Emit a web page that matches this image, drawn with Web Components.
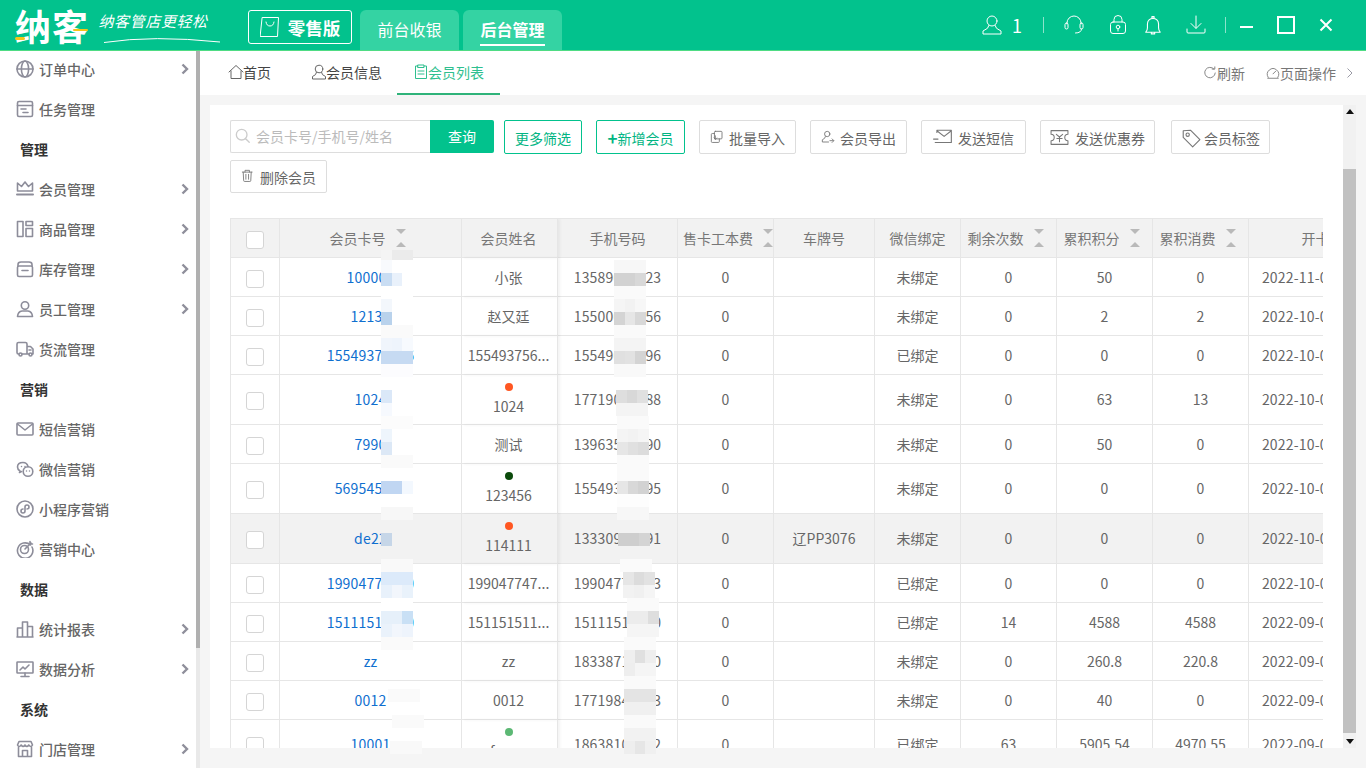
<!DOCTYPE html>
<html lang="zh-CN">
<head>
<meta charset="utf-8">
<title>纳客 - 会员列表</title>
<style>
  html, body { margin: 0; height: 100%; overflow: hidden; }
  body { font-family: "Noto Sans CJK SC", "Liberation Sans", sans-serif; }
</style>
</head>
<body>
<nk-app>
  <nk-header slot="header"></nk-header>
  <nk-sidenav slot="side">
    <nav-item icon="globe" arrow>订单中心</nav-item>
    <nav-item icon="task">任务管理</nav-item>
    <nav-title>管理</nav-title>
    <nav-item icon="crown" arrow>会员管理</nav-item>
    <nav-item icon="goods" arrow>商品管理</nav-item>
    <nav-item icon="box" arrow>库存管理</nav-item>
    <nav-item icon="staff" arrow>员工管理</nav-item>
    <nav-item icon="truck">货流管理</nav-item>
    <nav-title>营销</nav-title>
    <nav-item icon="mail">短信营销</nav-item>
    <nav-item icon="wechat">微信营销</nav-item>
    <nav-item icon="mini">小程序营销</nav-item>
    <nav-item icon="target">营销中心</nav-item>
    <nav-title>数据</nav-title>
    <nav-item icon="bars" arrow>统计报表</nav-item>
    <nav-item icon="screen" arrow>数据分析</nav-item>
    <nav-title>系统</nav-title>
    <nav-item icon="store" arrow>门店管理</nav-item>
  </nk-sidenav>
  <nk-tabs slot="tabs"></nk-tabs>
  <nk-card slot="content">
    <member-toolbar slot="toolbar"></member-toolbar>
    <member-table slot="table"></member-table>
  </nk-card>
  <page-scrollbar slot="scroll"></page-scrollbar>
  <mosaic-layer slot="over"></mosaic-layer>
</nk-app>

<script>
const ICONS = {
  globe: '<circle cx="9" cy="9" r="8"/><ellipse cx="9" cy="9" rx="3.6" ry="8"/><path d="M1 9h16"/>',
  task: '<rect x="1.5" y="1.5" width="15" height="15" rx="1.5"/><path d="M1.5 5.5h15M5 9h5M7 12.5h5"/>',
  crown: '<path d="M1.5 11V3l4 3.5L9 2l3.5 4.5 4-3.5v8z"/><path d="M1 14.5h16" stroke-width="2"/>',
  goods: '<rect x="1.5" y="1.5" width="5.5" height="15"/><rect x="10" y="1.5" width="6.5" height="4"/><rect x="10" y="8.5" width="6.5" height="8"/>',
  box: '<path d="M2 6V4.500Q2 2 5 2h8q3 0 3 2.500V6"/><rect x="1.500" y="6" width="15" height="10.500" rx="1.500"/><path d="M6 10.500h6"/>',
  staff: '<circle cx="9" cy="5.500" r="3.700"/><path d="M1.500 16.500Q2 11.500 6 11h6q4 .5 4.500 5.500z"/>',
  truck: '<path d="M11 14H6M2.500 14Q1 14 1 12.500V4q0-1.500 1.500-1.500h7Q11 2.500 11 4v10h2M11 6.500h3.500L17 9v5h-1"/><circle cx="4.500" cy="14.500" r="1.500"/><circle cx="14.500" cy="14.500" r="1.500"/><path d="M13 10h2"/>',
  mail: '<rect x="1" y="3" width="16" height="12" rx="1"/><path d="M1.500 4L9 10l7.500-6"/>',
  wechat: '<path d="M12 6.500Q11 2.500 7 2.500 1.500 2.500 1.500 7q0 2.500 2.500 4l-.5 1.500 2-1"/><circle cx="12" cy="11.500" r="4.800"/><path d="M5.500 6.500h.01M9 6.500h.01M10.500 11h.01M13.500 11h.01" stroke-width="1.500"/>',
  mini: '<circle cx="9" cy="9" r="8"/><path d="M9 7v4a2 2 0 1 1-2-2M9 11V7a2 2 0 1 1 2 2"/>',
  target: '<path d="M14.500 5A7.700 7.700 0 1 0 16 7"/><circle cx="8.500" cy="9.500" r="4"/><path d="M9 9l6-6M14 1.500v2.500h2.500"/>',
  bars: '<path d="M1.500 17V8h5v9M6.500 17V2h5v15M11.500 17V6.500h5V17M1 17h16"/>',
  screen: '<rect x="1" y="2" width="16" height="11" rx=".5"/><path d="M9 13v3M5 16.500h8M4 10l3-3 2 2 4-4"/>',
  store: '<path d="M2.500 7.500V16.500h13V7.500M1.500 5L3 1.500h12L16.500 5q-1.500 3-3.700 0-1.900 3-3.800 0-1.900 3-3.800 0Q3 8 1.500 5zM6.500 16.500v-6h5v6"/>',

  home: '<path d="M1 8l7-6.500L15 8M3 7v7.500h10V7"/>',
  user: '<circle cx="8" cy="5" r="3.800"/><path d="M5.500 8.500Q5.500 11 1.500 12.500V15h13v-2.500q-4-1.500-4-4"/>',
  clip: '<path d="M5 2H2.500v12.500h11V2H11"/><rect x="5" y="1" width="6" height="2.500"/><path d="M5 7h6M5 10h6"/>',
  refresh: '<path d="M12.500 3.500A6 6 0 1 0 14 8M10.500 3.500h3V1"/>',
  gauge: '<path d="M2.500 13A6.500 6.500 0 1 1 13.500 13M8 9l3-3M2 14h12"/>',

  search: '<circle cx="7.500" cy="7.500" r="6"/><path d="M12 12l4 4"/>',
  batch: '<rect x="5" y="1.500" width="8.500" height="8.500" rx="1"/><path d="M5 4H2.500A1 1 0 0 0 1.500 5v8a1 1 0 0 0 1 1h7a1 1 0 0 0 1-1v-3M6 6.500v4M4.500 9L6 10.500 7.500 9"/>',
  export: '<circle cx="7" cy="4.500" r="3"/><path d="M5 7.500Q5 9.500 1.500 11v2.500h7M10 12h4M12.500 10l2 2-2 2"/>',
  sms: '<path d="M3.500 4V2h13v11h-13M3.500 2.500l6.500 5 6.500-5M.5 10h4M2 13h3"/>',
  coupon: '<path d="M1 2.500h16v3.500a3 3 0 0 0 0 6v3.500H1V12a3 3 0 0 0 0-6zM6 6l3 2.500L12 6M9 8.500V13M6.500 10h5"/>',
  tag: '<path d="M2 2.500L8.500 2 17 10.500 10.500 17 2 8.500z"/><circle cx="6" cy="6" r="1.500"/>',
  trash: '<path d="M1.500 3.500h11M4.500 3.500V1.500h5v2M2.500 3.500l.5 9.500q0 1 1 1h6q1 0 1-1l.5-9.500M5.500 6v5.500M8.500 6v5.500"/>',
  bag: '<path d="M2.500.5h16l-1 19H.5zM6 5q.5 4 4 4t4-4"/>',
  headset: '<path d="M3 9V8a7 7 0 0 1 14 0v1"/><rect x="1" y="8" width="3" height="6" rx="1.500"/><rect x="16" y="8" width="3" height="6" rx="1.500"/><path d="M17.500 14q0 4-6 4"/>',
  lock: '<path d="M5 7V4.500a4 4 0 0 1 8 0V7"/><rect x="1.500" y="7" width="15" height="11.500" rx="2.500"/><circle cx="9" cy="12" r="1.800"/><path d="M9 14v2"/>',
  bell: '<path d="M8 2.500V1.500h2v1M2.500 15.500q1.500-1.500 1.500-4V8a5 5 0 0 1 10 0v3.500q0 2.500 1.500 4zM7.500 15.500v1.500h3v-1.500"/>',
  down: '<path d="M10 1v12M5 8.500l5 5 5-5M1 14v3q0 1 1 1h16q1 0 1-1v-3"/>',
  account: '<circle cx="10" cy="6" r="5"/><path d="M7 10.500Q7 13.500 1 16v3h18v-3q-6-2.500-6-5.500"/>'
};

function svg(name, w, h, vb) {
  return `<svg width="${w}" height="${h}" viewBox="0 0 ${vb}" fill="none" stroke="currentColor" stroke-linecap="round" stroke-linejoin="round">${ICONS[name]}</svg>`;
}

class NkApp extends HTMLElement {
  constructor() {
    super();
    this.attachShadow({ mode: "open" });
  }
  connectedCallback() {
    this.shadowRoot.innerHTML = `
      <style>
        :host { display: flex; flex-direction: column; width: 1366px; height: 768px; overflow: hidden; background: #f5f5f5; }
        .body { flex: 1; display: flex; min-height: 0; }
        .main { flex: 1; display: flex; flex-direction: column; min-width: 0; }
        .pane { flex: 1; display: flex; min-height: 0; padding: 10px 10px 20px 10px; }
      </style>
      <slot name="header"></slot>
      <div class="body">
        <slot name="side"></slot>
        <div class="main">
          <slot name="tabs"></slot>
          <div class="pane">
            <slot name="content"></slot>
            <slot name="scroll"></slot>
          </div>
        </div>
      </div>
      <slot name="over"></slot>
    `;
  }
}

class NkHeader extends HTMLElement {
  constructor() {
    super();
    this.attachShadow({ mode: "open" });
  }
  connectedCallback() {
    this.shadowRoot.innerHTML = `
      <style>
        :host { display: flex; align-items: stretch; height: 51px; box-sizing: border-box; background: #02c28d; border-bottom: 1px solid #4fdc84; color: #fff; flex: none; }
        .logo { position: relative; margin-left: 15px; width: 75px; font-size: 36px; font-weight: 700; line-height: 50px; letter-spacing: 1px; white-space: nowrap; }
        .logo i { position: absolute; background: #f5c518; border-radius: 2px; }
        .slogan { width: 148px; margin-left: 10px; position: relative; }
        .slogan span { display: block; font-size: 15px; line-height: 20px; margin-top: 11px; letter-spacing: .6px; transform: skewX(-14deg); white-space: nowrap; }
        .slogan svg { position: absolute; left: 3px; top: 36px; }
        .edition { display: flex; align-items: center; justify-content: center; gap: 9px; width: 104px; height: 34px; box-sizing: border-box; margin: 10px 8px 0 0; border: 1px solid #fff; border-radius: 3px; font-size: 17.500px; font-weight: 700; }
        .tab { width: 99px; height: 40px; margin: 10px 4px 0 0; background: #34d3a3; border-radius: 6px 6px 0 0; font-size: 16px; display: flex; justify-content: center; }
        .tab span { line-height: 38px; height: 34px; }
        .tab.on span { font-weight: 700; border-bottom: 2px solid #fff; }
        .right { margin-left: auto; display: flex; align-items: center; padding-right: 20px; height: 50px; }
        .num { font-size: 18px; margin-left: 10px; width: 10px; text-align: center; }
        .sep { width: 1px; height: 16px; background: rgba(255,255,255,.55); }
        .ic { display: flex; justify-content: center; }
        .win { width: 40px; display: flex; justify-content: center; align-items: center; }
        .min { width: 13px; height: 2px; background: #fff; }
        .max { width: 14px; height: 14px; border: 2px solid #fff; }
      </style>
      <div class="logo">纳客<i style="left:0;top:37px;width:10px;height:3px"></i><i style="left:58px;top:29px;width:15px;height:2px"></i></div>
      <div class="slogan"><span>纳客管店更轻松</span>
        <svg width="118" height="8" viewBox="0 0 118 8" fill="none" stroke="#fff"><path d="M1 6.500Q50 -1 117 6" stroke-width="1"/></svg>
      </div>
      <div class="edition">${svg("bag", 19, 20, "19 20")}<span>零售版</span></div>
      <div class="tab"><span>前台收银</span></div>
      <div class="tab on"><span>后台管理</span></div>
      <div class="right">
        ${svg("account", 20, 20, "20 20")}
        <span class="num">1</span>
        <span class="sep" style="margin:0 19px 0 21px"></span>
        <span class="ic" style="margin-right:24px">${svg("headset", 22, 20, "20 20")}</span>
        <span class="ic" style="margin-right:15px">${svg("lock", 18, 20, "18 20")}</span>
        <span class="ic" style="margin-right:22px">${svg("bell", 22, 20, "18 18")}</span>
        <span class="ic" style="margin-right:19px">${svg("down", 20, 20, "20 20")}</span>
        <span class="sep"></span>
        <span class="win"><i class="min" style="margin-top:4px"></i></span>
        <span class="win"><i class="max"></i></span>
        <span class="win"><svg width="14" height="14" viewBox="0 0 14 14" stroke="#fff" stroke-width="2"><path d="M1.500 1.500l11 11M12.500 1.500l-11 11"/></svg></span>
      </div>
    `;
  }
}

class NkSidenav extends HTMLElement {
  constructor() {
    super();
    this.attachShadow({ mode: "open" });
  }
  connectedCallback() {
    this.shadowRoot.innerHTML = `
      <style>
        :host { display: flex; width: 200px; flex: none; height: 717px; overflow: hidden; background: #fff; }
        .list { width: 196px; height: 760px; margin-top: -2px; }
        .bar { width: 4px; height: 717px; background: #e9e9e9; }
        .bar i { display: block; height: 597px; background: #b0b0b0; }
      </style>
      <div class="list"><slot></slot></div>
      <div class="bar"><i></i></div>
    `;
  }
}

class NavItem extends HTMLElement {
  constructor() {
    super();
    this.attachShadow({ mode: "open" });
  }
  connectedCallback() {
    const arrow = this.hasAttribute("arrow");
    this.shadowRoot.innerHTML = `
      <style>
        :host { display: flex; align-items: center; height: 40px; padding-left: 16px; color: #666; font-size: 14px; font-weight: 500; }
        svg.i { color: #8d8d9a; margin-right: 5px; flex: none; stroke-width: 1.600; }
        .lab { flex: 1; line-height: 20px; }
        svg.a { margin-right: 7px; }
      </style>
      ${svg(this.getAttribute("icon"), 18, 18, "18 18").replace("<svg", '<svg class="i"')}
      <span class="lab"><slot></slot></span>
      ${arrow ? '<svg class="a" width="8" height="12" viewBox="0 0 8 12" fill="none" stroke="#8f8f9b" stroke-width="2.400"><path d="M1.500 1.500L6 6l-4.500 4.500"/></svg>' : ""}
    `;
  }
}

class NavTitle extends HTMLElement {
  constructor() {
    super();
    this.attachShadow({ mode: "open" });
  }
  connectedCallback() {
    this.shadowRoot.innerHTML = `
      <style>
        :host { display: block; height: 40px; line-height: 40px; padding-left: 20px; color: #333; font-size: 14px; font-weight: 700; }
      </style>
      <slot></slot>
    `;
  }
}

class NkTabs extends HTMLElement {
  constructor() {
    super();
    this.attachShadow({ mode: "open" });
  }
  connectedCallback() {
    this.shadowRoot.innerHTML = `
      <style>
        :host { display: flex; align-items: stretch; height: 44px; padding-left: 12px; background: #fff; font-size: 14px; color: #444; flex: none; }
        .t { display: flex; align-items: center; padding: 0 16px; height: 42px; }
        .t svg { margin-right: -1px; color: #666; stroke-width: 1; }
        .on { color: #2fbf8f; border-bottom: 2px solid #2fb37a; }
        .on svg { color: #2fbf8f; }
        .tools { margin-left: auto; display: flex; align-items: center; height: 44px; color: #777; padding-right: 12px; }
        .tools svg { color: #777; stroke-width: 1; }
      </style>
      <div class="t" style="margin-right:8px">${svg("home", 16, 16, "16 16")}<span>首页</span></div>
      <div class="t" style="margin-right:-1px">${svg("user", 16, 16, "16 16")}<span>会员信息</span></div>
      <div class="t on">${svg("clip", 16, 16, "16 16")}<span>会员列表</span></div>
      <div class="tools">
        ${svg("refresh", 14, 14, "16 16")}<span style="margin-right:21px">刷新</span>
        ${svg("gauge", 14, 14, "16 16")}<span>页面操作</span>
        <svg style="margin-left:10px" width="8" height="12" viewBox="0 0 8 12" fill="none" stroke="#9a9aa5" stroke-width="2.400"><path d="M1.500 1.500L6 6l-4.500 4.500"/></svg>
      </div>
    `;
  }
}

class NkCard extends HTMLElement {
  constructor() {
    super();
    this.attachShadow({ mode: "open" });
  }
  connectedCallback() {
    this.shadowRoot.innerHTML = `
      <style>
        :host { display: block; flex: 1; min-width: 0; background: #fff; padding: 15px 20px 0 20px; overflow: hidden; }
      </style>
      <slot name="toolbar"></slot>
      <slot name="table"></slot>
    `;
  }
}

class ToolButton extends HTMLElement {
  constructor() {
    super();
    this.attachShadow({ mode: "open" });
  }
  connectedCallback() {
    const icon = this.getAttribute("icon");
    const size = this.getAttribute("size") || 16;
    this.shadowRoot.innerHTML = `
      <style>
        :host { display: inline-flex; align-items: center; justify-content: center; gap: 3px; height: 34px; padding-top: 1px; box-sizing: border-box; border: 1px solid #ddd; border-radius: 2px; color: #666; font-size: 14px; background: #fff; }
        :host([primary]) { border-color: #02c28d; color: #02b583; gap: 0; }
        svg { color: #777; stroke-width: 1; flex: none; }
      </style>
      ${icon ? svg(icon, size, size, "18 18") : ""}
      <slot></slot>
    `;
    this.style.width = this.getAttribute("w") + "px";
  }
}

class MemberToolbar extends HTMLElement {
  constructor() {
    super();
    this.attachShadow({ mode: "open" });
  }
  connectedCallback() {
    this.shadowRoot.innerHTML = `
      <style>
        :host { display: flex; flex-wrap: wrap; gap: 6px 14px; font-size: 14px; }
        .search { display: flex; height: 33px; margin-right: -4px; }
        .inp { width: 200px; box-sizing: border-box; border: 1px solid #ddd; border-right: 0; border-radius: 2px 0 0 2px; display: flex; align-items: center; gap: 5px; padding: 0 0 2px 4px; color: #bbb; }
        .inp svg { color: #ccc; stroke-width: 1.500; }
        .go { width: 64px; background: #02c28d; color: #fff; border-radius: 0 2px 2px 0; display: flex; align-items: center; justify-content: center; padding-bottom: 2px; box-sizing: border-box; }
        .plus { font-weight: 700; font-size: 17px; line-height: 16px; }
      </style>
      <div class="search">
        <div class="inp">${svg("search", 16, 16, "18 18")}<span>会员卡号/手机号/姓名</span></div>
        <div class="go">查询</div>
      </div>
      <tool-button w="78" primary>更多筛选</tool-button>
      <tool-button w="89" primary><span class="plus">+</span>新增会员</tool-button>
      <tool-button w="97" icon="batch">批量导入</tool-button>
      <tool-button w="97" icon="export">会员导出</tool-button>
      <tool-button w="105" icon="sms" size="20" style="gap:5px">发送短信</tool-button>
      <tool-button w="115" icon="coupon" size="19" style="gap:6px">发送优惠券</tool-button>
      <tool-button w="99" icon="tag" size="20" style="margin-left:2px">会员标签</tool-button>
      <tool-button w="97" icon="trash" style="height:33px">删除会员</tool-button>
    `;
  }
}

// 会员数据，隐藏的号码用 0 占位
const MEMBERS = [
  ["100001", "小张", "", "13589000023", "", "未绑定", "0", "50", "0", "2022-11-01 10:00:00"],
  ["12134", "赵又廷", "", "15500000056", "", "未绑定", "0", "2", "2", "2022-10-01 10:00:00"],
  ["15549375696", "155493756...", "", "15549000096", "", "已绑定", "0", "0", "0", "2022-10-01 10:00:00"],
  ["1024", "1024", "#ff5722", "17719000088", "", "未绑定", "0", "63", "13", "2022-10-01 10:00:00"],
  ["7990", "测试", "", "13963500090", "", "未绑定", "0", "50", "0", "2022-10-01 10:00:00"],
  ["569545000", "123456", "#0b4a0b", "15549300095", "", "未绑定", "0", "0", "0", "2022-10-01 10:00:00"],
  ["de22", "114111", "#ff5722", "13330900091", "辽PP3076", "未绑定", "0", "0", "0", "2022-10-01 10:00:00"],
  ["19904770000", "199047747...", "", "19904770003", "", "已绑定", "0", "0", "0", "2022-10-01 10:00:00"],
  ["15111515000", "151151511...", "", "15111515000", "", "已绑定", "14", "4588", "4588", "2022-09-01 10:00:00"],
  ["zz", "zz", "", "18338710000", "", "未绑定", "0", "260.8", "220.8", "2022-09-01 10:00:00"],
  ["0012", "0012", "", "17719840003", "", "未绑定", "0", "40", "0", "2022-09-01 10:00:00"],
  ["10001", "fanan", "#5cb874", "18638100002", "", "已绑定", "63", "5905.54", "4970.55", "2022-09-01 10:00:00"]
];

class MemberTable extends HTMLElement {
  constructor() {
    super();
    this.attachShadow({ mode: "open" });
  }
  sortHead(text, start) {
    return `<div class="sh${start ? " st" : ""}"><span>${text}</span><i class="ar"><b class="d"></b><b class="u"></b></i></div>`;
  }
  connectedCallback() {
    const rows = MEMBERS.map((m, i) => `
      <tr class="${m[2] ? "tall" : ""}${i === 6 ? " hov" : ""}">
        <td><i class="cb"></i></td>
        <td><a>${m[0]}</a></td>
        <td class="nm">${m[2] ? `<i class="dot" style="background:${m[2]}"></i>` : ""}<div>${m[1]}</div></td>
        <td class="num">${m[3]}</td>
        <td>0</td>
        <td>${m[4]}</td>
        <td>${m[5]}</td>
        <td>${m[6]}</td>
        <td>${m[7]}</td>
        <td>${m[8]}</td>
        <td class="num date">${m[9]}</td>
      </tr>`).join("");
    this.shadowRoot.innerHTML = `
      <style>
        :host { display: block; margin-top: 25px; width: 1093px; box-sizing: border-box; overflow: hidden; border-left: 1px solid #e6e6e6; border-top: 1px solid #e6e6e6; font-size: 14px; color: #666; }
        table { border-collapse: separate; border-spacing: 0; table-layout: fixed; width: 1180px; }
        th, td { box-sizing: border-box; height: 39px; padding: 0; border-right: 1px solid #e6e6e6; border-bottom: 1px solid #e6e6e6; text-align: center; white-space: nowrap; overflow: hidden; line-height: 20px; }
        th { background: #f2f2f2; font-weight: 400; font-size: 14px; color: #777; }
        tr.tall td { height: 50px; padding-bottom: 1px; }
        tr.hov td { background: #f2f2f2; }
        td:nth-child(3), th:nth-child(3) { box-shadow: 2px 0 3px rgba(0,0,0,.05); position: relative; padding-right: 2px; }
        a { color: #0f6fcf; letter-spacing: .2px; }
        .num { letter-spacing: .2px; }
        .date { padding-right: 2px; }
        .cb { display: inline-block; width: 18px; height: 18px; box-sizing: border-box; border: 1px solid #d5d5d5; border-radius: 3px; background: #fff; vertical-align: middle; }
        .dot { display: block; width: 8px; height: 8px; border-radius: 50%; margin: 0 auto 5px; }
        .sh { display: flex; justify-content: center; align-items: center; gap: 10px; padding-right: 6px; }
        .sh.st { justify-content: flex-start; padding: 0 0 0 5px; white-space: nowrap; }
        .ar { display: flex; flex-direction: column; gap: 8px; flex: none; width: 10px; }
        .ar b { width: 0; height: 0; border-left: 5px solid transparent; border-right: 5px solid transparent; }
        .d { border-top: 5px solid #b9b9b9; }
        .u { border-bottom: 5px solid #b9b9b9; }
      </style>
      <table>
        <colgroup>
          <col style="width:49px"><col style="width:182px"><col style="width:96px"><col style="width:120px"><col style="width:96px"><col style="width:101px"><col style="width:86px"><col style="width:96px"><col style="width:96px"><col style="width:96px"><col style="width:162px">
        </colgroup>
        <thead>
          <tr>
            <th><i class="cb"></i></th>
            <th>${this.sortHead("会员卡号")}</th>
            <th>会员姓名</th>
            <th>手机号码</th>
            <th>${this.sortHead("售卡工本费", true)}</th>
            <th>车牌号</th>
            <th>微信绑定</th>
            <th>${this.sortHead("剩余次数")}</th>
            <th>${this.sortHead("累积积分")}</th>
            <th>${this.sortHead("累积消费")}</th>
            <th>开卡时间</th>
          </tr>
        </thead>
        <tbody>${rows}</tbody>
      </table>
    `;
  }
}

class PageScrollbar extends HTMLElement {
  constructor() {
    super();
    this.attachShadow({ mode: "open" });
  }
  connectedCallback() {
    this.shadowRoot.innerHTML = `
      <style>
        :host { display: flex; flex-direction: column; width: 13px; flex: none; background: #f1f1f1; }
        .btn { height: 13px; display: flex; align-items: center; justify-content: center; flex: none; }
        .up { border-left: 4px solid transparent; border-right: 4px solid transparent; border-bottom: 5px solid #111; }
        .dn { border-left: 4px solid transparent; border-right: 4px solid transparent; border-top: 5px solid #111; }
        .track { flex: 1; padding-top: 51px; display: flex; }
        .thumb { flex: 1; background: #c1c1c1; margin-bottom: 2px; }
      </style>
      <div class="btn"><i class="up"></i></div>
      <div class="track"><div class="thumb"></div></div>
      <div class="btn"><i class="dn"></i></div>
    `;
  }
}

// 打码块：[x, y, 颜色...]，每块约 10.67x13
const MOSAIC = [
  [381, 250, "#f4f4f4", "#ebebeb", "#ebebeb"],
  [381, 260, "#f8fafd", "#fff", "#fff"], [381, 273, "#c9ddf3", "#e9f1fb", "#fff"], [381, 286, "#fff", "#fff", "#fff"],
  [381, 299, "#f3f7fc", "#fff", "#fff"], [381, 312, "#b9d2ec", "#fff", "#fff"], [381, 325, "#fafafa", "#fafafa", "#fafafa"],
  [381, 338, "#f0f5fc", "#eef4fc", "#f7fafe"], [381, 351, "#c6daf2", "#c6daf2", "#c6daf2"], [381, 364, "#fcfcfe", "#fcfcfe", "#fcfcfe"],
  [381, 377, "#fff", "#fff", "#fff"], [381, 390, "#dbe8f8", "#fff", "#fff"], [381, 403, "#f6f9fe", "#fff", "#fff"],
  [381, 416, "#fcfcfc", "#fcfcfc", "#fcfcfc"], [381, 429, "#eef5fc", "#fff", "#fff"], [381, 442, "#dce8f6", "#fff", "#fff"],
  [381, 455, "#fafafa", "#fafafa", "#fafafa"], [381, 468, "#fff", "#fff", "#fff"], [381, 481, "#c0d6f2", "#c0d6f2", "#f3f8fe"],
  [381, 494, "#fff", "#fff", "#fff"], [381, 507, "#f7f7f7", "#f7f7f7", "#f7f7f7"], [381, 533, "#c6d6e8"],
  [381, 559, "#f9f9f9", "#f9f9f9", "#f9f9f9"], [381, 572, "#dceafa", "#dceafa", "#dceafa"], [381, 585, "#e8f1fb", "#f2f6fc", "#e9f2fb"],
  [381, 598, "#fff", "#fff", "#fff"], [381, 611, "#e6f0fa", "#e6f0fa", "#c9e0f5"], [381, 624, "#eaf2fb", "#f2f6fc", "#eef4fc"],
  [381, 637, "#fafafa", "#fafafa", "#fafafa"], [388, 689, "#fafafa", "#fafafa", "#fafafa"], [392, 715, "#fafafa", "#fafafa", "#fafafa"],
  [390, 741, "#f9f9f9", "#f9f9f9", "#f9f9f9"],

  [614, 260, "#f7f7f7", "#f7f7f7", "#f7f7f7"], [614, 273, "#d2d2d2", "#d2d2d2", "#d8d8d8"], [614, 286, "#fafafa", "#fafafa", "#fafafa"],
  [614, 299, "#f5f5f5", "#f2f2f2", "#f7f7f7"], [614, 312, "#d4d4d4", "#e6e6e6", "#d8d8d8"], [614, 325, "#fafafa", "#fafafa", "#fafafa"],
  [614, 338, "#f4f4f4", "#f4f4f4", "#f4f4f4"], [614, 351, "#e0e0e0", "#e2e2e2", "#d4d4d4"], [614, 364, "#f9f9f9", "#f9f9f9", "#f9f9f9"],
  [616, 390, "#dedede", "#d8d8d8", "#e0e0e0"], [616, 403, "#f4f4f4", "#f4f4f4", "#f4f4f4"], [617, 416, "#fafafa", "#fafafa", "#fafafa"],
  [617, 429, "#f4f4f4", "#f2f2f2", "#f5f5f5"], [617, 442, "#e6e6e6", "#e0e0e0", "#dcdcdc"], [617, 455, "#fafafa", "#fafafa", "#fafafa"],
  [617, 468, "#fafafa", "#fafafa", "#fafafa"], [617, 481, "#e6e6e6", "#d8d8d8", "#d2d2d2"], [617, 494, "#fdfdfd", "#fdfdfd", "#fdfdfd"],
  [617, 507, "#f7f7f7", "#f7f7f7", "#f7f7f7"], [618, 533, "#cecece", "#cecece", "#d4d4d4"], [620, 559, "#fafafa", "#fafafa", "#fafafa"],
  [623, 572, "#e6e6e6", "#dcdcdc", "#e2e2e2"], [623, 585, "#f2f2f2", "#f0f0f0", "#f5f5f5"], [627, 598, "#fafafa", "#fafafa", "#fafafa"],
  [627, 611, "#ececec", "#ececec", "#dedede"], [627, 624, "#f5f5f5", "#f5f5f5", "#f5f5f5"], [624, 637, "#fafafa", "#fafafa", "#fafafa"],
  [624, 650, "#efefef", "#e0e0e0", "#eeeeee"], [624, 663, "#eeeeee", "#f5f5f5", "#f5f5f5"], [624, 676, "#fafafa", "#fafafa", "#fafafa"],
  [624, 689, "#e4e4e4", "#e4e4e4", "#e4e4e4"], [624, 702, "#f0f0f0", "#f0f0f0", "#f0f0f0"], [624, 715, "#fafafa", "#fafafa", "#fafafa"],
  [624, 728, "#f2f2f2", "#f2f2f2", "#f2f2f2"], [624, 741, "#eeeeee", "#e6e6e6", "#f0f0f0"]
];

class MosaicLayer extends HTMLElement {
  constructor() {
    super();
    this.attachShadow({ mode: "open" });
  }
  connectedCallback() {
    let html = "";
    MOSAIC.forEach(([x, y, ...colors]) => {
      colors.forEach((c, i) => {
        html += `<i style="left:${x + i * 10.67}px;top:${y}px;background:${c}"></i>`;
      });
    });
    this.shadowRoot.innerHTML = `
      <style>
        :host { position: absolute; left: 0; top: 0; width: 0; height: 0; }
        i { position: absolute; width: 10.670px; height: 13px; }
      </style>
      ${html}
    `;
  }
}

customElements.define("nk-app", NkApp);
customElements.define("nk-header", NkHeader);
customElements.define("nk-sidenav", NkSidenav);
customElements.define("nav-item", NavItem);
customElements.define("nav-title", NavTitle);
customElements.define("nk-tabs", NkTabs);
customElements.define("nk-card", NkCard);
customElements.define("tool-button", ToolButton);
customElements.define("member-toolbar", MemberToolbar);
customElements.define("member-table", MemberTable);
customElements.define("page-scrollbar", PageScrollbar);
customElements.define("mosaic-layer", MosaicLayer);
</script>
</body>
</html>
